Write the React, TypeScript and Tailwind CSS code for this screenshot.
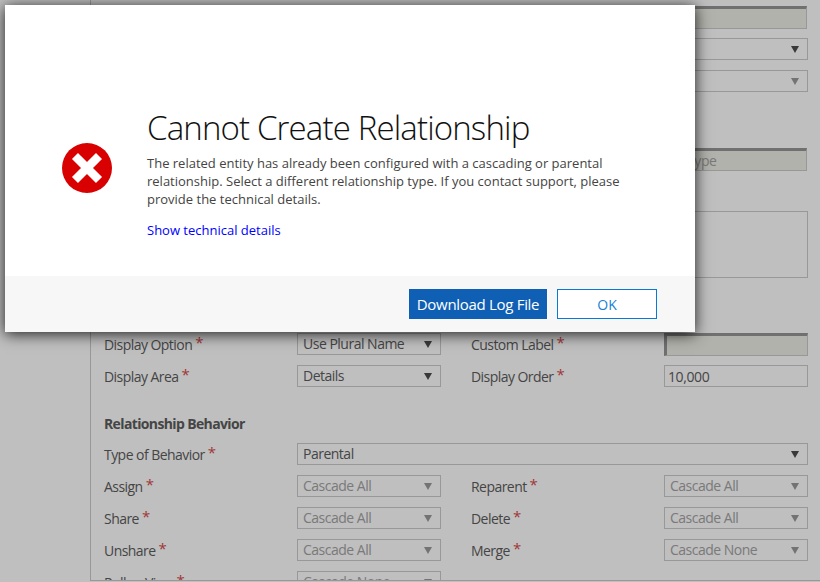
import React from 'react';

const font = { fontFamily: '"Open Sans", "Liberation Sans", sans-serif' };

const Caret: React.FC<{ disabled?: boolean }> = ({ disabled }) => (
  <svg width="8" height="7" viewBox="0 0 8 7" className={disabled ? 'text-[#9a9a9a]' : 'text-[#4c4c4c]'}>
    <path d="M0 0h8L4 7z" fill="currentColor" />
  </svg>
);

const Label: React.FC<{ text: string }> = ({ text }) => (
  <div className="flex items-start h-[22px] pt-[1px] text-[14px] tracking-[-0.55px] text-[#5c5c5c]">
    <span className="leading-[22px]">{text}</span>
    <span className="ml-[3px] mt-[1px] text-[15px] leading-[15px] text-[#d84a4a]">*</span>
  </div>
);

const Select: React.FC<{ value?: string; disabled?: boolean; className?: string }> = ({ value, disabled, className }) => (
  <div className={`flex items-center justify-between h-[22px] pl-[5px] pr-[8px] border border-[#cbcbcb] text-[14px] tracking-[-0.5px] ${disabled ? 'text-[#a3a3a3]' : 'text-[#5c5c5c]'} ${className ?? ''}`}>
    <span className="leading-[20px]">{value}</span>
    <Caret disabled={disabled} />
  </div>
);

const LockedInput: React.FC<{ value?: string; left?: boolean; className?: string }> = ({ value, left, className }) => (
  <div className={`h-[23px] border border-[#cbcbcb] border-t-[3px] border-t-[#969696] bg-[#eeeee6] text-[14px] leading-[19px] tracking-[-0.4px] text-[#a3a3a3] ${left ? 'border-l-[3px] border-l-[#969696]' : ''} ${className ?? ''}`}>
    {value}
  </div>
);

const Row: React.FC<{ children: React.ReactNode; className?: string }> = ({ children, className }) => (
  <div className={`grid grid-cols-[193px_144px_30px_193px_144px] items-start ${className ?? 'h-[22px] mb-[10px]'}`}>
    {children}
  </div>
);

export default function App() {
  return (
    <div className="relative w-[820px] h-[582px] overflow-hidden bg-white" style={font}>
      {/* form behind the dialog */}
      <div className="ml-[90px] h-[581px] overflow-hidden border-l border-b border-[#cbcbcb] pl-[13px] pt-[6px]">
        <Row>
          <div className="col-start-5"><LockedInput className="w-[143px]" /></div>
        </Row>
        <Row>
          <div className="col-start-5"><Select /></div>
        </Row>
        <Row className="h-[22px] mb-[56px]">
          <div className="col-start-5"><Select disabled /></div>
        </Row>
        <Row className="h-[23px] mb-[40px]">
          <div className="col-start-5"><LockedInput className="w-[143px] pl-[22px]" value="Type" /></div>
        </Row>
        <Row className="h-[67px] mb-[55px]">
          <div className="col-start-5 h-[67px] border border-[#cbcbcb]" />
        </Row>
        <Row>
          <Label text="Display Option" />
          <Select value="Use Plural Name" />
          <div />
          <Label text="Custom Label" />
          <LockedInput left />
        </Row>
        <Row>
          <Label text="Display Area" />
          <Select value="Details" />
          <div />
          <Label text="Display Order" />
          <div className="h-[22px] border border-[#cbcbcb] pl-[3px] text-[14px] leading-[21px] tracking-[-0.4px] text-[#5c5c5c]">10,000</div>
        </Row>
        <h3 className="mt-[25px] mb-[7px] h-[24px] text-[14px] leading-[24px] font-bold tracking-[-0.63px] text-[#5c5c5c]">Relationship Behavior</h3>
        <Row>
          <Label text="Type of Behavior" />
          <Select value="Parental" className="col-span-4" />
        </Row>
        <Row>
          <Label text="Assign" />
          <Select value="Cascade All" disabled />
          <div />
          <Label text="Reparent" />
          <Select value="Cascade All" disabled />
        </Row>
        <Row>
          <Label text="Share" />
          <Select value="Cascade All" disabled />
          <div />
          <Label text="Delete" />
          <Select value="Cascade All" disabled />
        </Row>
        <Row>
          <Label text="Unshare" />
          <Select value="Cascade All" disabled />
          <div />
          <Label text="Merge" />
          <Select value="Cascade None" disabled />
        </Row>
        <Row>
          <Label text="Rollup View" />
          <Select value="Cascade None" disabled />
        </Row>
      </div>

      {/* dim layer */}
      <div className="absolute inset-0 bg-black/25" />

      {/* dialog */}
      <div className="absolute left-[5px] top-[5px] flex h-[327px] w-[690px] flex-col bg-white shadow-[0_2px_14px_rgba(0,0,0,0.85)]">
        <div className="flex flex-1 items-start">
          <div className="ml-[57px] mt-[138px] w-[85px] shrink-0">
            <svg width="50" height="50" viewBox="0 0 50 50">
              <circle cx="25" cy="25" r="25" fill="#d80000" />
              <path d="M16 16l18 18M34 16L16 34" stroke="#fff" strokeWidth="8.5" strokeLinecap="square" fill="none" />
            </svg>
          </div>
          <div className="pt-[99px] w-[490px]">
            <h1 className="text-[33px] font-light leading-[48px] tracking-[-0.85px] text-[#111]">Cannot Create Relationship</h1>
            <p className="mt-[2px] text-[13px] leading-[18px] tracking-[0px] text-[#444]">
              The related entity has already been configured with a cascading or parental relationship. Select a different relationship type. If you contact support, please provide the technical details.
            </p>
            <a className="mt-[13px] block text-[13px] leading-[18px] tracking-[0px] text-[#0000ff]" href="#">Show technical details</a>
          </div>
        </div>
        <div className="flex h-[56px] items-start justify-end gap-[10px] bg-[#f7f7f7] pr-[38px] pt-[13px]">
          <button className="h-[30px] w-[138px] bg-[#0f5fb5] text-[15px] tracking-[-0.3px] text-white">Download Log File</button>
          <button className="h-[30px] w-[100px] border border-[#0a78d7] bg-white text-[14px] text-[#1a7fd4]">OK</button>
        </div>
      </div>
    </div>
  );
}
